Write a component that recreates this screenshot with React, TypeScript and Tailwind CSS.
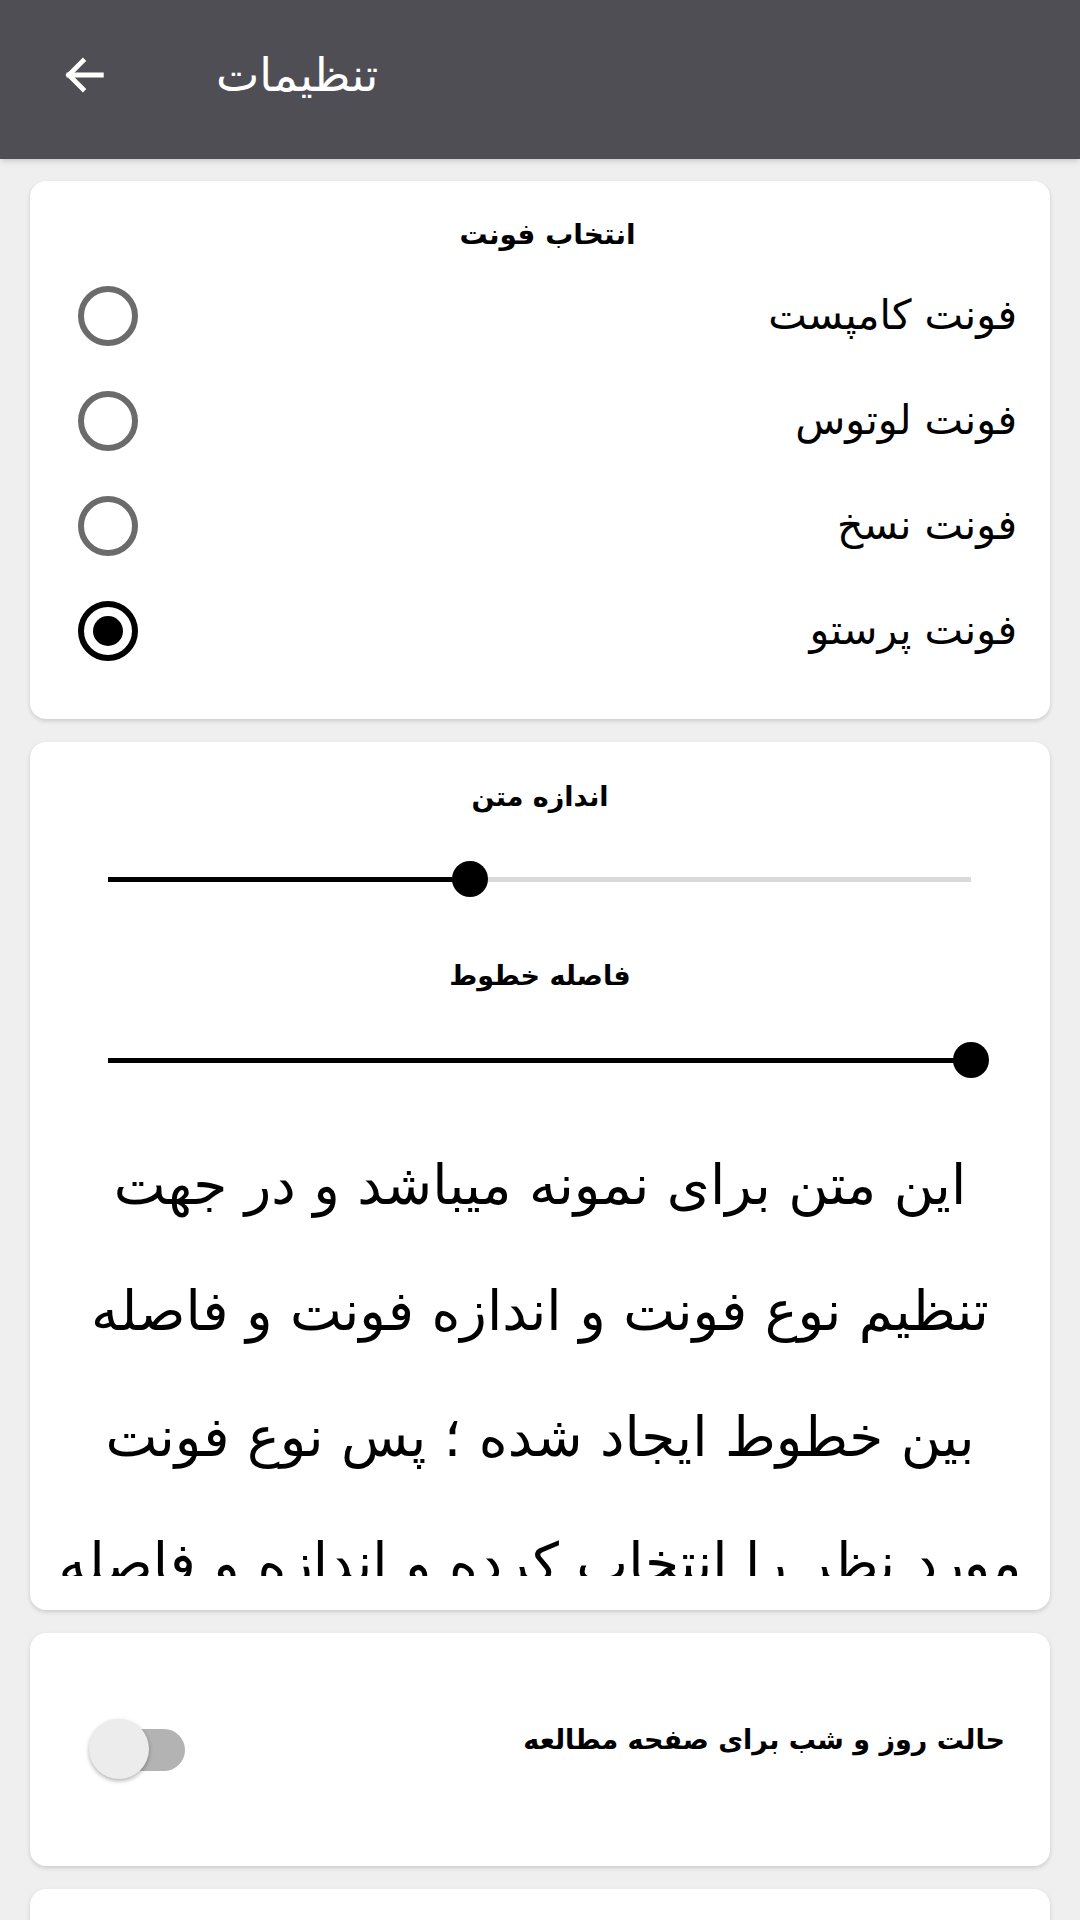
import { useState } from 'react';

const fontStack = { fontFamily: '"DejaVu Sans", "Noto Sans", sans-serif' };

const fonts = ['فونت کامپست', 'فونت لوتوس', 'فونت نسخ', 'فونت پرستو'];

const sampleLines = [
  'این متن برای نمونه میباشد و در جهت',
  'تنظیم نوع فونت و اندازه فونت و فاصله',
  'بین خطوط ایجاد شده ؛ پس نوع فونت',
  'مورد نظر را انتخاب کرده و اندازه و فاصله',
];

function Radio({ checked }: { checked: boolean }) {
  return (
    <span
      className={`flex h-[60px] w-[60px] items-center justify-center rounded-full border-[6px] ${
        checked ? 'border-black' : 'border-[#6b6b6b]'
      }`}
    >
      {checked && <span className="h-[30px] w-[30px] rounded-full bg-black" />}
    </span>
  );
}

function Slider({ value }: { value: number }) {
  return (
    <div className="relative ml-[78px] h-[40px] w-[863px]">
      <div className="absolute left-0 right-0 top-[18px] h-[5px] bg-[#d9d9d9]" />
      <div className="absolute left-0 top-[18px] h-[5px] bg-black" style={{ width: `${value * 100}%` }} />
      <div
        className="absolute top-[2px] h-[36px] w-[36px] -translate-x-1/2 rounded-full bg-black"
        style={{ left: `${value * 100}%` }}
      />
    </div>
  );
}

export default function App() {
  const [selected, setSelected] = useState(3);

  return (
    <div className="min-h-[1920px] w-[1080px] bg-[#efefef]" style={fontStack}>
      <div className="flex h-[159px] items-center bg-[#4f4e54] px-[58px] pb-[10px] shadow-md">
        <svg width="52" height="52" viewBox="0 0 24 24" fill="none" stroke="white" strokeWidth="2.2" strokeLinecap="square">
          <path d="M20 12H5" />
          <path d="M11.5 5.5L5 12l6.5 6.5" />
        </svg>
        <span className="ml-[106px] text-[46px] leading-[60px] text-white">تنظیمات</span>
      </div>

      <div className="flex flex-col gap-[23px] px-[30px] pt-[22px]">
        <div className="rounded-[16px] bg-white pb-[36px] pl-[48px] pr-[33px] pt-[34px] shadow-[0_2px_4px_rgba(0,0,0,0.15)]">
          <div className="h-[40px] text-center text-[28px] font-bold leading-[40px] text-black">انتخاب فونت</div>
          <div className="mt-[8px]">
            {fonts.map((name, i) => (
              <div key={name} className="flex h-[105px] items-center justify-between" onClick={() => setSelected(i)}>
                <Radio checked={selected === i} />
                <span dir="rtl" className="text-[41px] text-black">
                  {name}
                </span>
              </div>
            ))}
          </div>
        </div>

        <div className="flex flex-col items-stretch rounded-[16px] bg-white pb-[34px] pt-[35px] shadow-[0_2px_4px_rgba(0,0,0,0.15)]">
          <div className="h-[40px] text-center text-[27px] font-bold leading-[40px] text-black">اندازه متن</div>
          <div className="mt-[42px]">
            <Slider value={0.42} />
          </div>
          <div className="mt-[57px] h-[40px] text-center text-[27px] font-bold leading-[40px] text-black">فاصله خطوط</div>
          <div className="mt-[44px]">
            <Slider value={1} />
          </div>
          <div dir="rtl" className="mt-[42px] h-[454px] overflow-hidden text-center text-[55px] leading-[126px] text-black">
            {sampleLines.map((line) => (
              <div key={line} className="whitespace-nowrap">
                {line}
              </div>
            ))}
          </div>
        </div>

        <div className="flex h-[233px] items-center justify-between rounded-[16px] bg-white pl-[59px] pr-[45px] shadow-[0_2px_4px_rgba(0,0,0,0.15)]">
          <div className="relative h-[62px] w-[96px]">
            <div className="absolute right-0 top-[10px] h-[42px] w-[70px] rounded-full bg-[#b3b3b3]" />
            <div className="absolute left-0 top-0 h-[60px] w-[60px] rounded-full bg-[#ececec] shadow-[0_2px_4px_rgba(0,0,0,0.3)]" />
          </div>
          <span dir="rtl" className="mb-[18px] text-[27px] font-bold text-black">
            حالت روز و شب برای صفحه مطالعه
          </span>
        </div>

        <div className="h-[80px] rounded-[16px] bg-white shadow-[0_2px_4px_rgba(0,0,0,0.15)]" />
      </div>
    </div>
  );
}
